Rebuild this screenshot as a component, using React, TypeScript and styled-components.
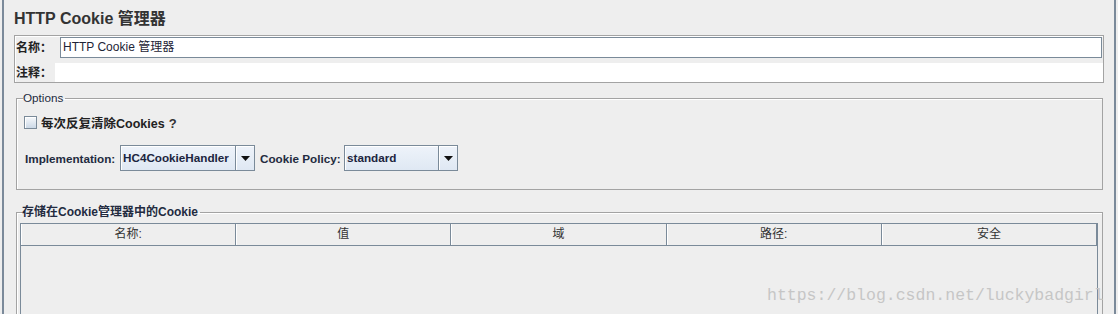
import React from "react";
import styled, { createGlobalStyle } from "styled-components";

const GlobalStyle = createGlobalStyle`
  html, body { margin: 0; padding: 0; background: #eeeeee; }
  body {
    font-family: "Liberation Sans", "Noto Sans CJK SC", sans-serif;
    font-size: 12px;
    color: #333333;
  }
  * { box-sizing: border-box; }
`;

const Frame = styled.div`
  position: relative;
  margin-left: 2px;
  width: 1114px;
  height: 314px;
  overflow: hidden;
  border-left: 2px solid #7b8a9a;
  border-right: 2px solid #7b8a9a;
  display: flex;
  flex-direction: column;
`;

const Title = styled.div`
  margin: 9px 0 0 10px;
  height: 20px;
  line-height: 20px;
  font-size: 16px;
  font-weight: bold;
  color: #333;
`;

const NamePanel = styled.div`
  margin: 6px 0 0 10px;
  width: 1090px;
  border: 1px solid #a3a3a3;
  box-shadow: inset 1px 1px 0 #ffffff;
  padding: 1px 0 0 1px;
  display: flex;
  flex-direction: column;
  gap: 5px;
`;

const FieldRow = styled.div<{ $h: number }>`
  display: flex;
  align-items: center;
  height: ${(p) => p.$h}px;
`;

const RowLabel = styled.span<{ $gap: number }>`
  width: 36px;
  margin-right: ${(p) => p.$gap}px;
  font-weight: bold;
  font-size: 12px;
  line-height: 14px;
  color: #222;
  white-space: nowrap;
`;

const TextField = styled.div`
  flex: 1;
  height: 21px;
  margin-right: 1px;
  background: #ffffff;
  border: 1px solid #7a8a99;
  padding: 0 2px;
  line-height: 19px;
  font-size: 12px;
  color: #1e2436;
  white-space: nowrap;
`;

const TextArea = styled.div`
  flex: 1;
  height: 19px;
  background: #ffffff;
`;

const Group = styled.fieldset<{ $top: number }>`
  margin: ${(p) => p.$top}px 0 0 12px;
  width: 1087px;
  min-width: 0;
  padding: 0;
  border: 1px solid #a3a3a3;
  box-shadow: inset 1px 1px 0 #ffffff;
`;

const Legend = styled.legend<{ $left: number; $bold?: boolean }>`
  margin-left: ${(p) => p.$left}px;
  padding: 0 2px 0 0;
  line-height: 14px;
  font-size: ${(p) => (p.$bold ? "12px" : "11.7px")};
  font-weight: ${(p) => (p.$bold ? "bold" : "normal")};
  color: #232b40;
`;

const OptionsBody = styled.div`
  padding: 11px 0 18px 7px;
  display: flex;
  flex-direction: column;
  gap: 16px;
`;

const CheckRow = styled.label`
  display: flex;
  align-items: center;
  height: 13px;
  gap: 4px;
  font-weight: bold;
  font-size: 12.5px;
  color: #222;
`;

const CheckBox = styled.span`
  width: 13px;
  height: 13px;
  border: 1px solid #7a8a99;
  background: linear-gradient(#f7f9fc, #ccd9e7);
  box-shadow: inset 1px 1px 0 #ffffff;
`;

const Help = styled.span`
  margin-left: 4px;
  font-size: 13px;
  font-weight: bold;
  color: #333;
`;

const ComboRow = styled.div`
  display: flex;
  align-items: center;
  height: 26px;
  padding-left: 1px;
`;

const ComboLabel = styled.span<{ $w: number; $ml?: number }>`
  width: ${(p) => p.$w}px;
  margin-left: ${(p) => p.$ml ?? 0}px;
  font-size: 11.7px;
  font-weight: bold;
  color: #232b40;
  white-space: nowrap;
`;

const Combo = styled.div<{ $w: number }>`
  width: ${(p) => p.$w}px;
  height: 26px;
  border: 1px solid #7a8a99;
  display: flex;
  background: linear-gradient(#eef3fa, #dfe8f3);
`;

const ComboValue = styled.div`
  flex: 1;
  padding-left: 2px;
  line-height: 24px;
  font-size: 11.7px;
  font-weight: bold;
  color: #1c2540;
  box-shadow: inset 1px 1px 0 #ffffff;
  white-space: nowrap;
  overflow: hidden;
`;

const ComboArrow = styled.div`
  width: 19px;
  border-left: 1px solid #7a8a99;
  display: flex;
  align-items: center;
  justify-content: center;
  box-shadow: inset 1px 1px 0 #ffffff;
`;

const CookieBody = styled.div`
  padding: 4px 4px 0 3px;
`;

const Table = styled.div`
  border-left: 1px solid #7a8a99;
  border-right: 1px solid #7a8a99;
  height: 140px;
  background: #eeeeee;
`;

const HeaderRow = styled.div`
  display: grid;
  grid-template-columns: repeat(5, 1fr);
  height: 23px;
  border-top: 1px solid #7a8a99;
  border-bottom: 1px solid #7a8a99;
`;

const HeaderCell = styled.div`
  border-right: 1px solid #7a8a99;
  box-shadow: inset 1px 0 0 #ffffff;
  text-align: center;
  line-height: 21px;
  font-size: 12px;
  color: #333;
`;

const Watermark = styled.div`
  position: absolute;
  left: 763px;
  top: 286px;
  font-family: "Liberation Mono", monospace;
  font-size: 16.5px;
  line-height: 20px;
  color: #c6c6c6;
  white-space: nowrap;
`;

const Arrow = () => (
  <svg width="9" height="5" viewBox="0 0 9 5">
    <path d="M0 0 H9 L4.5 5 Z" fill="#111" />
  </svg>
);

export default function App() {
  return (
    <>
      <GlobalStyle />
      <Frame>
        <Title>HTTP Cookie 管理器</Title>
        <NamePanel>
          <FieldRow $h={21}>
            <RowLabel $gap={8}>名称：</RowLabel>
            <TextField>HTTP Cookie 管理器</TextField>
          </FieldRow>
          <FieldRow $h={19}>
            <RowLabel $gap={3}>注释：</RowLabel>
            <TextArea />
          </FieldRow>
        </NamePanel>

        <Group $top={8}>
          <Legend $left={6}>Options</Legend>
          <OptionsBody>
            <CheckRow>
              <CheckBox />
              <span>
                每次反复清除Cookies
                <Help>?</Help>
              </span>
            </CheckRow>
            <ComboRow>
              <ComboLabel $w={95}>Implementation:</ComboLabel>
              <Combo $w={135}>
                <ComboValue>HC4CookieHandler</ComboValue>
                <ComboArrow>
                  <Arrow />
                </ComboArrow>
              </Combo>
              <ComboLabel $w={84} $ml={5}>
                Cookie Policy:
              </ComboLabel>
              <Combo $w={114}>
                <ComboValue>standard</ComboValue>
                <ComboArrow>
                  <Arrow />
                </ComboArrow>
              </Combo>
            </ComboRow>
          </OptionsBody>
        </Group>

        <Group $top={15}>
          <Legend $left={5} $bold>
            存储在Cookie管理器中的Cookie
          </Legend>
          <CookieBody>
            <Table>
              <HeaderRow>
                <HeaderCell>名称:</HeaderCell>
                <HeaderCell>值</HeaderCell>
                <HeaderCell>域</HeaderCell>
                <HeaderCell>路径:</HeaderCell>
                <HeaderCell>安全</HeaderCell>
              </HeaderRow>
            </Table>
          </CookieBody>
        </Group>

        <Watermark>https://blog.csdn.net/luckybadgirl</Watermark>
      </Frame>
    </>
  );
}
